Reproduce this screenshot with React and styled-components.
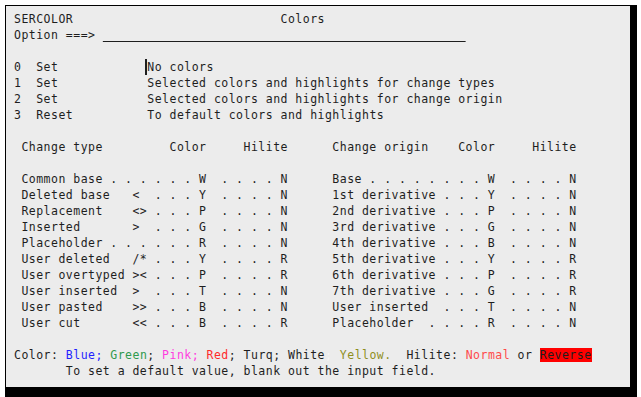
import styled, { createGlobalStyle } from "styled-components";

const options = [
  { num: "0", action: "Set", text: "No colors", cursor: true },
  { num: "1", action: "Set", text: "Selected colors and highlights for change types" },
  { num: "2", action: "Set", text: "Selected colors and highlights for change origin" },
  { num: "3", action: "Reset", text: "To default colors and highlights" },
];

// each row: left half (change type) and right half (change origin), 3270 columns
const rows = [
  [" Common base . . . . . . W  . . . . N", "Base . . . . . . . . W  . . . . N"],
  [" Deleted base   <  . . . Y  . . . . N", "1st derivative . . . Y  . . . . N"],
  [" Replacement    <> . . . P  . . . . N", "2nd derivative . . . P  . . . . N"],
  [" Inserted       >  . . . G  . . . . N", "3rd derivative . . . G  . . . . N"],
  [" Placeholder . . . . . . R  . . . . N", "4th derivative . . . B  . . . . N"],
  [" User deleted   /* . . . Y  . . . . R", "5th derivative . . . Y  . . . . R"],
  [" User overtyped >< . . . P  . . . . R", "6th derivative . . . P  . . . . R"],
  [" User inserted  >  . . . T  . . . . N", "7th derivative . . . G  . . . . R"],
  [" User pasted    >> . . . B  . . . . N", "User inserted  . . . T  . . . . N"],
  [" User cut       << . . . B  . . . . R", "Placeholder  . . . . R  . . . . N"],
];

const legend = [
  { text: "Color: " },
  { text: "Blue;", color: "#1f1fff" },
  { text: " " },
  { text: "Green", color: "#2f9a4e" },
  { text: "; " },
  { text: "Pink;", color: "#ff3ce0" },
  { text: " " },
  { text: "Red", color: "#ff2a2a" },
  { text: "; Turq; White" },
  { text: ";", color: "#f4f4f4" },
  { text: " " },
  { text: "Yellow.", color: "#8f8f1f" },
  { text: "  Hilite: " },
  { text: "Normal", color: "#ff4a4a" },
  { text: " or " },
];

function App() {
  return (
    <>
      <GlobalStyle />
      <Panel>
        <Line>{"SERCOLOR".padEnd(36)}Colors</Line>
        <Line>
          {"Option ===> "}
          <InputField>{" ".repeat(49)}</InputField>
        </Line>
        <Line />
        {options.map((o) => (
          <Line key={o.num}>
            {`${o.num}  ${o.action.padEnd(15)}`}
            {o.cursor ? <Cursor>{o.text[0]}</Cursor> : o.text[0]}
            {o.text.slice(1)}
          </Line>
        ))}
        <Line />
        <Line>
          {" Change type".padEnd(21) +
            "Color".padEnd(10) +
            "Hilite".padEnd(12) +
            "Change origin".padEnd(17) +
            "Color".padEnd(10) +
            "Hilite"}
        </Line>
        <Line />
        {rows.map(([left, right]) => (
          <Line key={left}>{left.padEnd(43) + right}</Line>
        ))}
        <Line />
        <Line>
          {legend.map((s, i) => (
            <Ink key={i} $color={s.color}>
              {s.text}
            </Ink>
          ))}
          <Reverse>Reverse</Reverse>
        </Line>
        <Line>{"       To set a default value, blank out the input field."}</Line>
      </Panel>
    </>
  );
}

const GlobalStyle = createGlobalStyle`
  html, body {
    margin: 0;
    padding: 0;
    background: #ffffff;
  }
`;

const Panel = styled.div`
  box-sizing: border-box;
  width: 632px;
  height: 392px;
  margin: 5px 0 0 5px;
  padding: 5px 0 0 8px;
  background: #ececec;
  border-style: solid;
  border-color: #000000;
  border-width: 1px 7px 10px 1px;
  color: #1e1e1e;
  font-family: "DejaVu Sans Mono", "Liberation Mono", monospace;
  font-size: 11.5px;
  letter-spacing: 0.48px;
`;

const Line = styled.div`
  height: 16px;
  line-height: 16px;
  white-space: pre;
`;

const InputField = styled.span`
  text-decoration: underline;
  text-decoration-thickness: 1px;
  text-underline-offset: 2px;
  text-decoration-color: #1e1e1e;
`;

const Cursor = styled.span`
  display: inline-block;
  height: 16px;
  vertical-align: top;
  border-left: 2px solid #1e1e1e;
  margin-left: -2px;
`;

const Ink = styled.span`
  color: ${(p) => p.$color || "inherit"};
`;

const Reverse = styled.span`
  background: #ff0000;
  color: #1e1e1e;
`;

export default App;
